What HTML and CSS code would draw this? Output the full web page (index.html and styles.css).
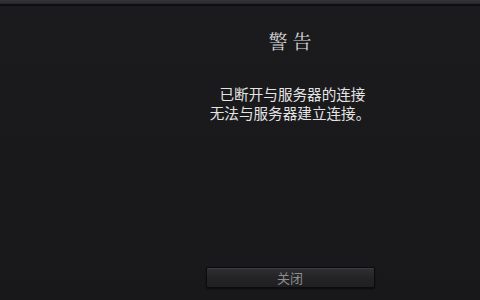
FILE: index.html
```html
<!DOCTYPE html>
<html lang="zh-CN">
<head>
    <meta charset="UTF-8">
    <title>警告</title>
    <link rel="stylesheet" href="styles.css">
</head>
<body>
    <div class="top-bar"></div>
    <div class="dialog">
        <h1 class="title">警告</h1>
        <div class="message">
            <p>已断开与服务器的连接</p>
            <p>无法与服务器建立连接。</p>
        </div>
        <button class="close-btn">关闭</button>
    </div>
</body>
</html>
```

FILE: styles.css
```css
html, body {
    margin: 0;
    height: 100%;
}

body {
    background: #1a1a1c;
    font-family: "Noto Sans CJK SC", "Liberation Sans", sans-serif;
    display: flex;
    flex-direction: column;
    overflow: hidden;
}

.top-bar {
    height: 4px;
    background: linear-gradient(#34343a, #26262b);
    border-bottom: 2px solid #0f0f11;
}

.dialog {
    flex-grow: 1;
    display: flex;
    flex-direction: column;
    align-items: center;
    padding-left: 100px;
    background: linear-gradient(#1b1b1e, #18181a);
}

.title {
    margin: 23px -5px 0 0;
    font-family: "Noto Serif CJK SC", "Noto Sans CJK SC", serif;
    font-size: 19px;
    font-weight: normal;
    letter-spacing: 5px;
    color: #d8d8d8;
    line-height: 24px;
}

.message {
    margin-top: 31px;
    text-align: center;
    color: #e4e4e4;
    font-size: 14.6px;
    line-height: 19px;
}

.message p {
    margin: 0;
}

.message p:first-child {
    padding-left: 5px;
}

.close-btn {
    margin-top: auto;
    margin-bottom: 12px;
    width: 169px;
    height: 21px;
    padding: 0;
    border: 1px solid #0c0c0d;
    border-radius: 2px;
    background: linear-gradient(#303034, #242427 50%, #1f1f22);
    box-shadow: inset 0 1px 0 #3c3c41, 0 1px 2px rgba(0,0,0,0.6);
    color: #8e8e8e;
    font-family: "Noto Sans CJK SC", sans-serif;
    font-size: 13px;
    line-height: 19px;
}
```
